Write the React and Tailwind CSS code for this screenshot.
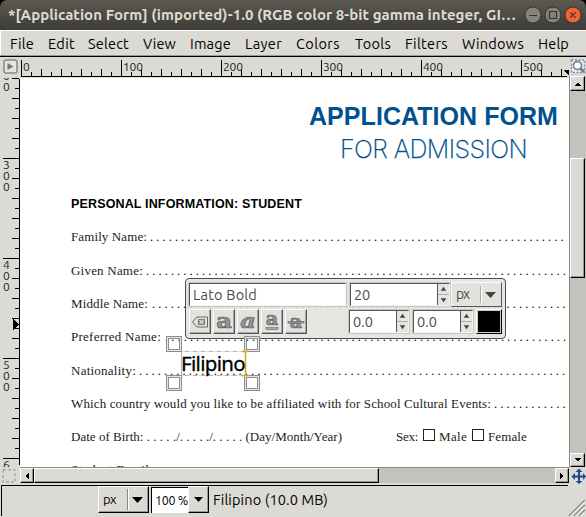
import React, { useLayoutEffect, useRef } from "react";

const UI = "font-['Ubuntu','Noto_Sans',sans-serif]";
const SERIF = "font-['Palatino_Linotype','Liberation_Serif',serif]";
const SANS = "font-['Liberation_Sans',sans-serif]";

// Text run that is tracked out (or in) to occupy exactly `w` pixels.
function Fit({ w, className = "", children }) {
  const ref = useRef(null);
  useLayoutEffect(() => {
    const el = ref.current;
    el.style.letterSpacing = "0px";
    const natural = el.getBoundingClientRect().width;
    el.style.letterSpacing = (w - natural) / String(children).length + "px";
  }, [w, children]);
  return (
    <span ref={ref} className={"inline-block whitespace-pre " + className}>
      {children}
    </span>
  );
}

function TitleBar() {
  return (
    <div className="h-[30px] bg-black">
      <div className={"flex h-full items-center rounded-t-[7px] bg-gradient-to-b from-[#5b5950] to-[#3d3c38] pl-[8px] text-[15px] font-bold text-[#dfdbd2] " + UI}>
        <Fit w={508}>*[Application Form] (imported)-1.0 (RGB color 8-bit gamma integer, GI…</Fit>
        <svg className="ml-auto mr-[4px]" width="58" height="18" viewBox="0 0 58 18">
          <g stroke="#35342f" strokeWidth="1">
            <circle cx="9" cy="9" r="8" fill="#85837a" />
            <circle cx="29" cy="9" r="8" fill="#85837a" />
            <circle cx="49" cy="9" r="8" fill="#ee6434" />
          </g>
          <g fill="none" stroke="#35342f" strokeWidth="1.2">
            <path d="M5 9.5H13M25.5 5.5h7v7h-7zM46.3 6.3l5.4 5.4M51.7 6.3l-5.4 5.4" />
          </g>
        </svg>
      </div>
    </div>
  );
}

const MENUS = [
  ["File", 24, 14],
  ["Edit", 27, 13],
  ["Select", 41, 14],
  ["View", 33, 14],
  ["Image", 41, 14],
  ["Layer", 37, 14],
  ["Colors", 44, 15],
  ["Tools", 36, 14],
  ["Filters", 43, 14],
  ["Windows", 62, 14],
  ["Help", 31, 0],
];

function MenuBar() {
  return (
    <div className={"flex h-[27px] items-center border-t border-b border-t-white border-b-black bg-[#dcdad5] pl-[10px] text-[14.5px] text-black shadow-[inset_0_-1px_0_#9a9892,inset_1px_0_0_#fff] " + UI}>
      {MENUS.map(([label, w, gap]) => (
        <span key={label} className="whitespace-nowrap" style={{ marginRight: gap }}>
          <Fit w={w}>{label}</Fit>
        </span>
      ))}
    </div>
  );
}

const TENS = Array.from({ length: 55 }, (_, i) => i);

function HorizontalRuler() {
  return (
    <svg width="549" height="21" viewBox="20 57 549 21" className={"block " + UI} shapeRendering="crispEdges">
      <rect x="20" y="57" width="549" height="21" fill="#dcdad5" />
      <rect x="21" y="76" width="546" height="1" fill="#000" />
      {TENS.map((i) => {
        const top = i % 10 === 0 ? 60 : i % 2 === 0 ? 69 : 72;
        return <rect key={i} x={21 + i * 10} y={top} width="1" height={76 - top} fill="#000" />;
      })}
      {[0, 100, 200, 300, 400, 500].map((v) => (
        <text key={v} x={23 + v} y="71" fontSize="12" textLength={v ? 20 : 7} fill="#222">
          {v}
        </text>
      ))}
      <path d="M563 70h6v6z" fill="#000" />
    </svg>
  );
}

function VerticalRuler() {
  const ticks = [];
  for (let y = 78; y < 466; y += 10) {
    const n = Math.round((y - 58) / 10);
    const left = n % 10 === 0 ? 3 : n % 2 === 0 ? 12 : 15;
    ticks.push(<rect key={y} x={left} y={y} width={19 - left} height="1" fill="#000" />);
  }
  return (
    <svg width="20" height="389" viewBox="0 78 20 389" className={"block " + UI} shapeRendering="crispEdges">
      <rect x="0" y="78" width="20" height="389" fill="#dcdad5" />
      <rect x="19" y="79" width="1" height="386" fill="#000" />
      {ticks}
      {[[58, "00", 22], [158, "300", 11], [258, "400", 11], [358, "500", 11], [458, "6", 11]].map(([y, digits, first]) => (
        <g key={y} fontSize="12" fill="#222">
          {digits.split("").map((d, i) => (
            <text key={i} x="3" y={y + first + i * 11}>{d}</text>
          ))}
        </g>
      ))}
      <path d="M13 319v11l6-5.500z" fill="#000" />
    </svg>
  );
}

const DOTS = ". ".repeat(80);

function Leader({ lead }) {
  return (
    <span className="min-w-0 flex-1 overflow-hidden text-[12.5px] whitespace-pre tracking-[-0.015px] text-black" style={{ marginLeft: lead }}>
      {DOTS}
    </span>
  );
}

const FIELDS = [
  ["Family Name:", 76, 3, 34],
  ["Given Name:", 72, 3, 33],
  ["Middle Name:", 77, 4, 33],
  ["Preferred Name:", 90, 4, 34],
  ["Nationality:", 65, 3, 33],
  ["Which country would you like to be affiliated with for School Cultural Events:", 420, 3, 33],
];

function CheckBox() {
  return <span className="ml-[5px] h-[12px] w-[12px] border border-[#222]" />;
}

function FormPage() {
  return (
    <div className={"relative h-[389px] w-[549px] overflow-hidden bg-white text-[#222] " + SERIF}>
      <div className={"ml-[289px] pt-[23px] text-[#00528f] " + SANS}>
        <div className="h-[31px] text-[25px] leading-[30px] font-bold">
          <Fit w={249}>APPLICATION FORM</Fit>
        </div>
        <div className="h-[36px] pl-[31px] text-[25px] leading-[35px] font-['Inter','Liberation_Sans',sans-serif] font-extralight [-webkit-text-stroke:0.25px_#00528f]">
          <Fit w={187}>FOR ADMISSION</Fit>
        </div>
      </div>
      <div className={"mt-[28px] h-[16px] pl-[51px] text-[12.5px] leading-[16px] font-bold text-black " + SANS}>
        <Fit w={231}>PERSONAL INFORMATION: STUDENT</Fit>
      </div>
      <div className="mt-[17px] pr-[2px] pl-[51px] text-[13px]">
        {FIELDS.map(([label, w, lead, h]) => (
          <div key={label} className="flex leading-[16px]" style={{ height: h }}>
            <Fit w={w}>{label}</Fit>
            <Leader lead={lead} />
          </div>
        ))}
        <div className="flex h-[33px] leading-[16px]">
          <Fit w={271}>Date of Birth: . . . . ./. . . . ./. . . . . (Day/Month/Year)</Fit>
          <span className="ml-[54px]"><Fit w={22}>Sex:</Fit></span>
          <CheckBox />
          <span className="ml-[4px]"><Fit w={28}>Male</Fit></span>
          <CheckBox />
          <span className="ml-[4px]"><Fit w={39}>Female</Fit></span>
        </div>
        <div className="leading-[16px]"><Fit w={82}>Student Email:</Fit></div>
      </div>
      <TextToolbar />
      <TextLayer />
    </div>
  );
}

// On-canvas text box with its four corner handles and the caret.
function TextLayer() {
  return (
    <div className="absolute top-[258px] left-[145px] h-[56px] w-[96px]">
      <svg className="absolute inset-0" width="96" height="56" viewBox="0 0 96 56" fill="none">
        <path d="M16 15.500H80M16 39.500H80M16.500 15V40" stroke="#b5b5a5" />
        <path d="M16 15.500H80M16 39.500H80" stroke="#e8e6c8" strokeDasharray="4 4" />
        {[[1, 0], [79, 0], [1, 39], [79, 39]].map(([x, y]) => (
          <g key={x + "-" + y}>
            <rect x={x + 0.5} y={y + 0.5} width="15" height="15" stroke="#8d8d8d" />
            <rect x={x + 1.5} y={y + 1.5} width="13" height="13" stroke="#e6e6e6" />
            <rect x={x + 2.5} y={y + 2.5} width="11" height="11" stroke="#8d8d8d" />
          </g>
        ))}
        <path d="M77 15.500h7M77 39.500h7M80.500 15v24" stroke="#d9a520" strokeWidth="1.500" />
      </svg>
      <div className="relative pt-[15px] pl-[16px] font-['Noto_Sans',sans-serif] text-[20.5px] leading-[24px] text-black [-webkit-text-stroke:0.3px_#000]">
        <Fit w={64}>Filipino</Fit>
      </div>
    </div>
  );
}

function Spinner() {
  return (
    <svg width="12" height="100%" viewBox="0 0 12 22" preserveAspectRatio="none" className="block shrink-0 border-l border-[#555] bg-[#e6e4e0]">
      <path d="M0 11H12" stroke="#aaa" />
      <path d="M3 7h6l-3-4zM3 15h6l-3 4z" fill="#444" />
    </svg>
  );
}

function Entry({ className, children, spin }) {
  return (
    <div className={"flex border border-[#555] border-r-[#f4f3f1] border-b-[#f4f3f1] bg-white text-[14.5px] text-[#4b4b4b] shadow-[0_0_0_1px_#c9c7c1] " + className}>
      <span className="flex min-w-0 flex-1 items-center pl-[3px]">{children}</span>
      {spin && <Spinner />}
    </div>
  );
}

function ToolButton({ children }) {
  return (
    <div className="h-[25px] w-[22px] border border-[#fafafa] border-r-[#555] border-b-[#555] bg-[#e4e2de] shadow-[inset_-1px_-1px_0_#aaa8a2]">
      <svg width="20" height="23" viewBox="0 0 20 23">{children}</svg>
    </div>
  );
}

function Glyph({ italic, y = 17.5, size = 21, wide = 1.15 }) {
  return (
    <g transform={`translate(10 ${y}) scale(${wide} 1)`}>
      <text textAnchor="middle" fontFamily="DejaVu Serif" fontSize={size} fontWeight="bold" fontStyle={italic ? "italic" : "normal"} fill="#969696" stroke="#5f5f5f" strokeWidth="0.7">
        a
      </text>
    </g>
  );
}

function TextToolbar() {
  return (
    <div className={"absolute top-[200px] left-[165px] h-[61px] w-[321px] rounded-[4px] border border-[#4b4b4b] bg-[#e2e0dc]/85 p-[3px] " + UI}>
      <div className="flex h-[25px] gap-[3px]">
        <Entry className="mt-[1px] mr-[1px] h-[23px] w-[157px]"><Fit w={64}>Lato Bold</Fit></Entry>
        <Entry spin className="mt-[1px] h-[23px] w-[100px]"><Fit w={16}>20</Fit></Entry>
        <div className="-ml-[2px] flex h-[25px] w-[51px] items-center border border-[#fafafa] border-r-[#555] border-b-[#555] bg-[#e4e2de] pl-[4px] text-[14px] text-[#4b4b4b]">
          <Fit w={13}>px</Fit>
          <span className="ml-[11px] h-[17px] w-[2px] border-l border-[#aaa8a2] bg-white" />
          <svg className="ml-[3px]" width="11" height="6" viewBox="0 0 11 6"><path d="M0 0h11L5.500 6z" fill="#444" /></svg>
        </div>
      </div>
      <div className="mt-[2px] flex h-[26px]">
        <div className="flex gap-[2px]">
          <ToolButton>
            <path d="M2.500 12L7 7h10.500v10H7z" fill="none" stroke="#666" />
            <rect x="8" y="9" width="7" height="6" fill="#777" />
            <path d="M9.500 10l4 4M13.500 10l-4 4" stroke="#e4e2de" strokeWidth="1.200" />
          </ToolButton>
          <ToolButton><Glyph /></ToolButton>
          <ToolButton><Glyph italic /></ToolButton>
          <ToolButton><Glyph y={14.5} size={19} wide={1} /><rect x="4" y="17.500" width="12" height="2" fill="#aaa" stroke="#666" strokeWidth=".6" /></ToolButton>
          <ToolButton><Glyph y={17.5} size={19} wide={1} /><rect x="2" y="11.500" width="16" height="1.600" fill="#999" stroke="#5f5f5f" strokeWidth=".6" /></ToolButton>
        </div>
        <Entry spin className="mt-[1px] ml-[42px] h-[23px] w-[60px]"><Fit w={20}>0.0</Fit></Entry>
        <Entry spin className="mt-[1px] ml-[4px] h-[23px] w-[60px]"><Fit w={20}>0.0</Fit></Entry>
        <div className="ml-[3px] h-[25px] w-[26px] border border-[#fafafa] border-r-black border-b-black bg-[#d0cec8] p-[1px]">
          <div className="h-full w-full bg-black" />
        </div>
      </div>
    </div>
  );
}

const RAISED = "border border-white border-r-black border-b-black bg-[#dcdad5] shadow-[inset_-1px_-1px_0_#9a9892]";

function ArrowButton({ d, className }) {
  return (
    <div className={"flex shrink-0 items-center justify-center " + RAISED + " " + className}>
      <svg width="8" height="8" viewBox="0 0 8 8" shapeRendering="crispEdges"><path d={d} fill="#000" /></svg>
    </div>
  );
}

function RightColumn() {
  return (
    <div className="flex w-[17px] flex-col">
      <svg width="17" height="19" viewBox="0 0 17 19" className="block shrink-0">
        <rect x="2.500" y="3" width="13" height="12.500" fill="#e9edf5" stroke="#7790bd" strokeWidth="1.500" strokeDasharray="2 1.500" />
        <circle cx="8.500" cy="8.500" r="4" fill="#fff" stroke="#888" strokeWidth="1.800" />
        <path d="M11.500 11.500l3.500 3.500" stroke="#777" strokeWidth="2.500" />
      </svg>
      <div className="flex h-[391px] flex-col border-l border-[#8a8882] bg-[#c4c2bd]">
        <ArrowButton className="h-[15px] w-[15px]" d="M1 6h6L4 2z" />
        <div className={"mt-[67px] h-[120px] w-[15px] " + RAISED} />
        <ArrowButton className="mt-auto h-[14px] w-[15px]" d="M1 2h6L4 6z" />
      </div>
    </div>
  );
}

function BottomScroll() {
  return (
    <div className="flex h-[17px] bg-[#dcdad5]">
      <svg width="20" height="17" viewBox="0 0 20 17">
        <rect x="3" y="3" width="12" height="12" fill="none" stroke="#aaa" strokeWidth="1.500" strokeDasharray="3 2" />
      </svg>
      <div className="flex h-[16px] w-[549px] border-t border-[#8a8882] bg-[#c4c2bd]">
        <ArrowButton className="h-[15px] w-[14px]" d="M6 1v6L2 4z" />
        <div className={"h-[15px] w-[345px] " + RAISED} />
        <ArrowButton className="ml-auto h-[15px] w-[14px]" d="M2 1v6l4-3z" />
      </div>
      <svg width="17" height="17" viewBox="0 0 17 17" fill="#204a87">
        <path d="M10 1.500l3.500 3.500h-2.500v3.500h3V6l3 3.500-3 3.500v-2.500h-3v3.500h2.500L10 17l-3.500-3H9v-3.500H6V13L2.500 9.500 6 6v2.500h3V5H6.500z" />
      </svg>
    </div>
  );
}

function StatusBar() {
  return (
    <div className={"flex h-[33px] bg-[#dcdad5] pt-[1px] pl-[1px] text-black " + UI}>
      <div className="flex h-[31px] w-[567px] border-t border-l border-black pl-[96px]">
        <div className={"flex h-[27px] w-[51px] items-center pl-[4px] text-[13px] " + RAISED}>
          <Fit w={13}>px</Fit>
          <span className="ml-[11px] h-[21px] w-[2px] border-l border-[#8a8882] bg-white" />
          <svg className="ml-[3px]" width="11" height="6" viewBox="0 0 11 6"><path d="M0 0h11L5.500 6z" /></svg>
        </div>
        <div className="mt-[1px] ml-[2px] flex h-[26px] w-[37px] items-center border-t border-l border-black bg-white pl-[3px] text-[12.5px]">
          <Fit w={33}>100 %</Fit>
        </div>
        <div className={"flex h-[27px] w-[21px] items-center justify-center " + RAISED}>
          <svg width="9" height="5" viewBox="0 0 9 5"><path d="M0 0h9L4.500 5z" /></svg>
        </div>
        <div className="flex h-[27px] items-center pl-[4px] text-[14.5px]"><Fit w={115}>Filipino (10.0 MB)</Fit></div>
      </div>
      <svg className="mt-auto ml-auto" width="18" height="18" viewBox="0 0 18 18">
        <path d="M1 17L17 1M6 17L17 6M11 17l6-6" stroke="#8a8882" strokeWidth="1.500" />
        <path d="M2.500 17L17 2.500M7.500 17L17 7.500M12.500 17l4.500-4.500" stroke="#fff" />
      </svg>
    </div>
  );
}

export default function App() {
  return (
    <div className="h-[517px] w-[586px] overflow-hidden bg-[#dcdad5]">
      <TitleBar />
      <MenuBar />
      <div className="flex h-[410px]">
        <div className="w-[20px]">
          <svg width="20" height="21" viewBox="0 0 20 21" className="block">
            <rect x="4" y="3" width="13" height="13" rx="2" fill="#e6e4e0" stroke="#8a8882" strokeWidth="1.500" />
            <path d="M7.500 6v7l6-3.500z" fill="#777" />
          </svg>
          <VerticalRuler />
        </div>
        <div className="w-[549px]">
          <HorizontalRuler />
          <FormPage />
        </div>
        <RightColumn />
      </div>
      <BottomScroll />
      <StatusBar />
    </div>
  );
}
